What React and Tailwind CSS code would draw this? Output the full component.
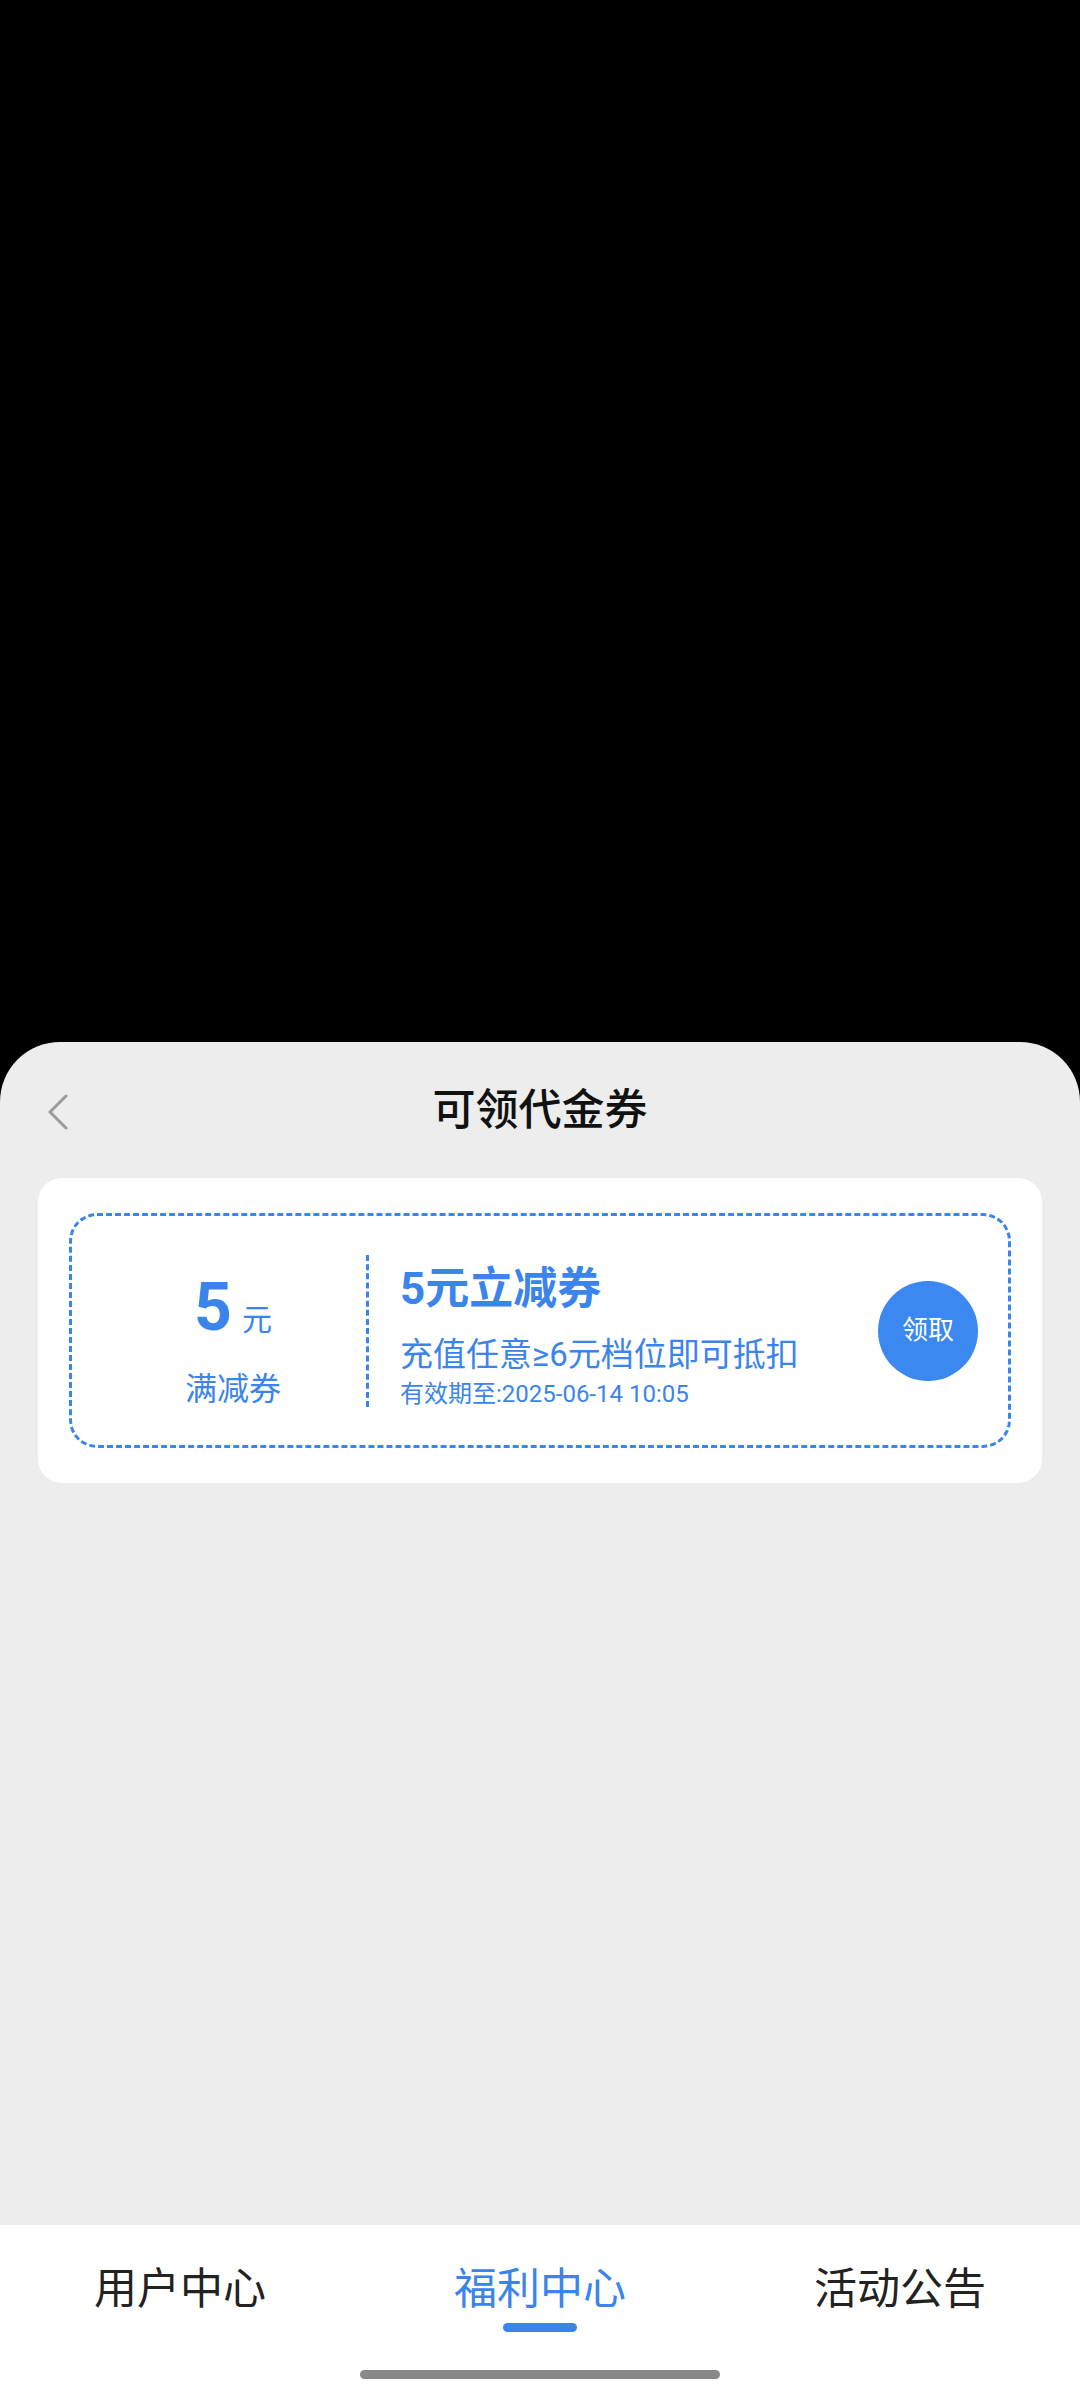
const font = { fontFamily: "Roboto, 'Noto Sans CJK SC', sans-serif" }

function BackIcon() {
  return (
    <svg width="24" height="36" viewBox="0 0 24 36" fill="none">
      <polyline points="20,2 4,18 20,34" stroke="#9a9a9a" strokeWidth="3" strokeLinecap="round" strokeLinejoin="round" />
    </svg>
  )
}

function Coupon() {
  return (
    <div className="mx-[38px] rounded-[24px] bg-white px-[31px] py-[35px]">
      <div className="flex h-[235px] items-center rounded-[28px] border-[3px] border-dashed border-[#3a84ec]">
        <div className="flex w-[294px] flex-col items-center pl-[28px] pt-[24px] text-[#3a84ec]">
          <div className="flex items-baseline">
            <span className="text-[66px] font-bold leading-[64px]">5</span>
            <span className="ml-[10px] text-[30px] leading-[34px]">元</span>
          </div>
          <div className="mt-[29px] text-[32px] leading-[40px]">满减券</div>
        </div>
        <div className="h-[152px] w-0 border-l-[3px] border-dashed border-[#3a84ec]" />
        <div className="flex flex-1 flex-col pl-[31px] pt-[12px] text-[#3a84ec]">
          <div className="text-[44px] font-bold leading-[48px]">5元立减券</div>
          <div className="mt-[22px] text-[33px] leading-[40px]">充值任意≥6元档位即可抵扣</div>
          <div className="mt-[4px] text-[24px] leading-[30px]">有效期至:2025-06-14 10:05</div>
        </div>
        <button className="mr-[30px] flex h-[100px] w-[100px] items-center justify-center rounded-full bg-[#3a88f0] text-[26px] text-white">
          领取
        </button>
      </div>
    </div>
  )
}

function Tab({ label, active }) {
  return (
    <div className="flex flex-col items-center pt-[40px]">
      <span className={`text-[43px] leading-[48px] ${active ? 'text-[#3a84ec]' : 'text-[#222222]'}`}>{label}</span>
      {active && <div className="mt-[10px] h-[9px] w-[74px] rounded-full bg-[#3a84ec]" />}
    </div>
  )
}

export default function App() {
  return (
    <div className="flex h-[2400px] w-[1080px] flex-col bg-black" style={font}>
      <div className="h-[1042px] shrink-0" />
      <div className="flex flex-1 flex-col rounded-t-[60px] bg-[#ededed]">
        <div className="relative flex h-[136px] items-center justify-center">
          <div className="absolute left-[46px] top-[52px]">
            <BackIcon />
          </div>
          <span className="text-[43px] font-medium leading-[50px] text-[#111111]">可领代金券</span>
        </div>
        <Coupon />
      </div>
      <div className="flex h-[175px] shrink-0 flex-col items-center bg-white">
        <div className="grid h-[117px] w-full grid-cols-3">
          <Tab label="用户中心" />
          <Tab label="福利中心" active />
          <Tab label="活动公告" />
        </div>
        <div className="mt-[28px] h-[9px] w-[360px] rounded-full bg-[#888888]" />
      </div>
    </div>
  )
}
